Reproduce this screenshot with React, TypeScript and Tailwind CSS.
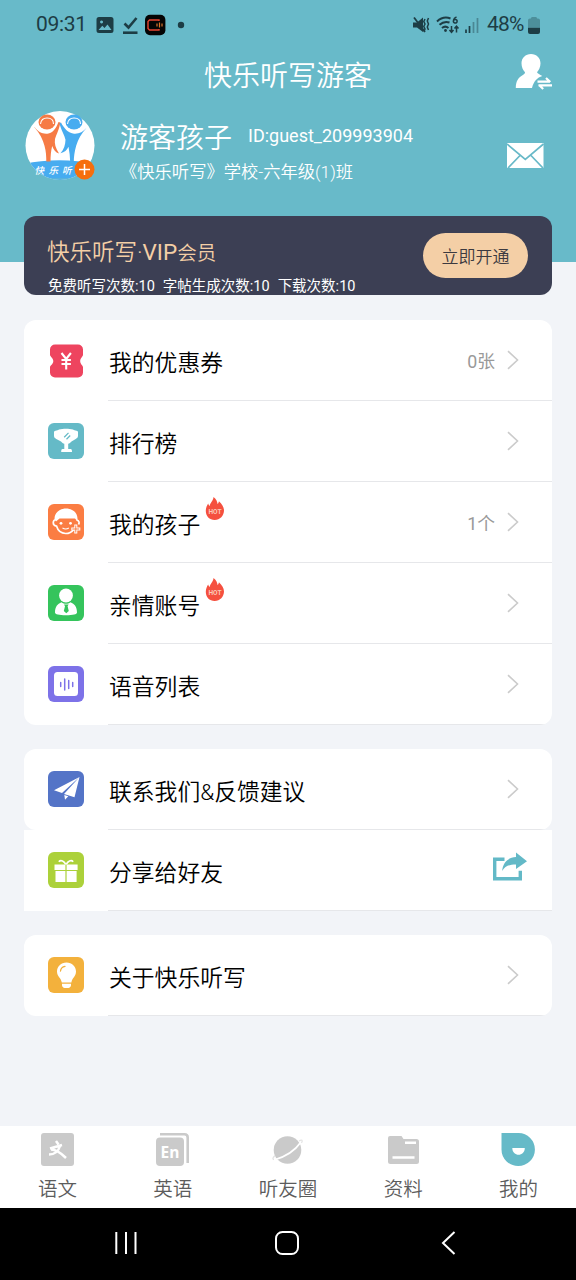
import type { ReactNode } from 'react';

interface MenuItem {
  label: string;
  icon: ReactNode;
  value?: string;
  hot?: boolean;
  share?: boolean;
}

function Tile({ color, children }: { color: string; children: ReactNode }) {
  return (
    <svg width="36" height="36" viewBox="0 0 36 36" className="mb-[2px] shrink-0">
      <rect width="36" height="36" rx="6" fill={color} />
      {children}
    </svg>
  );
}

const CouponIcon = () => (
  <svg width="36" height="36" viewBox="0 0 36 36" className="shrink-0">
    <path d="M7 1.500h23a5 5 0 0 1 5 5v5.200c0 2-2.800 3-2.800 6.300s2.800 4.300 2.800 6.300v5.200a5 5 0 0 1-5 5H7a5 5 0 0 1-5-5v-5.200c0-2 3.300-3 3.300-6.300S2 13.700 2 11.700V6.500a5 5 0 0 1 5-5z" fill="#ee445f" />
    <path d="M13.500 10l4.700 6 4.700-6M13.500 17h9.400M13.500 21h9.400M18.200 16.500v10" stroke="#fff" strokeWidth="2.100" fill="none" />
  </svg>
);

const TrophyIcon = () => (
  <Tile color="#65bac7">
    <path d="M11 6.500c4-1 10-1 14 0 1 .8 2 1 3.500 1.200 1 .1 1.500.8 1.500 1.800v3.200c0 1.500-.8 2.500-2.300 3.200l-4.200 2.600c-1 1.200-2 2-3.300 2.300V26h2.500c1 0 1.300 1 1.300 3H13.200c0-2 .3-3 1.300-3h1.800v-5.200c-1.300-.3-2.300-1.100-3.300-2.300l-4.700-2.600C6.800 15.200 6 14.200 6 12.700V9.500c0-1 .5-1.700 1.500-1.800C9 7.500 10 7.300 11 6.500z" fill="#fff" />
    <path d="M16.200 14.200l4.300-4.300M18.500 16.200l3.700-3.700" stroke="#65bac7" strokeWidth="1.300" />
  </Tile>
);

const ChildIcon = () => (
  <Tile color="#fb7d43">
    <path d="M6.500 15c0-6 5-10.500 11.500-10.500S29.500 8.800 29.500 14.500v3L27 14.500H11.500L8 17.500z" fill="#fff" />
    <path d="M8 15.500c-3.500.5-4 6 .5 6.600 1.500 5 5 7.400 9.200 7.400 3.400 0 6-1.300 7.800-3.800M28.500 16c3 .5 3 3 2 4.500" stroke="#fff" strokeWidth="1.700" fill="none" />
    <circle cx="13" cy="19.300" r="1.400" fill="#fff" />
    <circle cx="22.500" cy="19.300" r="1.400" fill="#fff" />
    <path d="M14.500 24q3.300 2 6.300 0" stroke="#fff" strokeWidth="1.100" fill="none" />
    <path d="M27.800 20.500v9M23.300 25h9" stroke="#fff" strokeWidth="3" />
    <path d="M27.800 21.500v7M24.300 25h7" stroke="#fb7d43" strokeWidth="1" />
  </Tile>
);

const FamilyIcon = () => (
  <Tile color="#35c45c">
    <circle cx="18" cy="10.500" r="6.900" fill="#fff" />
    <path d="M7 27.500c0-5.500 2.500-8.700 6.500-10.200 2.800 2 6.200 2 9 0 4 1.500 6.500 4.700 6.500 10.200 0 1.700-4 2.800-11 2.800S7 29.200 7 27.500z" fill="#fff" />
    <path d="M16 19.500h4.600l-1 1.800 1.200 4.700-2.500 2.300-2.500-2.300 1.200-4.700z" fill="#35c45c" />
  </Tile>
);

const VoiceIcon = () => (
  <Tile color="#7d72e8">
    <rect x="6" y="6" width="24" height="24" rx="3.500" fill="#fff" />
    <path d="M12.700 16.500v4M16.700 13v11M20.700 14.500v8M24.700 16.500v4" stroke="#7d72e8" strokeWidth="1.500" strokeLinecap="round" />
  </Tile>
);

const PlaneIcon = () => (
  <Tile color="#5474c7">
    <path d="M31.500 6L6 19.200l8 2.700zM31.500 6L16 23l10.500 3.200zM16.300 24l4 1.200-3.300 3.500z" fill="#fff" />
  </Tile>
);

const GiftIcon = () => (
  <Tile color="#acd13a">
    <path d="M6.500 12.500h10.900V18H6.500zM18.600 12.500h11V18h-11zM7.500 19h9.900v11H7.500zM18.600 19h10v11h-10z" fill="#fff" />
    <path d="M17.800 12.500c-1.500-3.500-5-5-7-2.800M18.200 12.500c1.500-3.500 5-5 7-2.800" stroke="#fff" strokeWidth="1.700" fill="none" />
  </Tile>
);

const BulbIcon = () => (
  <Tile color="#f3b13c">
    <path d="M18.500 5.500c5.500 0 9.500 4 9.500 9 0 5-4 6.500-4.600 11h-9.600C13.200 21 9 19.500 9 14.500c0-5 4-9 9.500-9zM14 26.800h9v1.500c0 1.500-1.200 2.600-2.700 2.600h-3.600c-1.500 0-2.700-1.100-2.700-2.600z" fill="#fff" />
    <path d="M12.500 14c.3-2.500 2-4.300 4.500-4.700" stroke="#f3b13c" strokeWidth="1.300" fill="none" strokeLinecap="round" />
  </Tile>
);

const groups: MenuItem[][] = [
  [
    { label: '我的优惠券', icon: <CouponIcon />, value: '0张' },
    { label: '排行榜', icon: <TrophyIcon /> },
    { label: '我的孩子', icon: <ChildIcon />, value: '1个', hot: true },
    { label: '亲情账号', icon: <FamilyIcon />, hot: true },
    { label: '语音列表', icon: <VoiceIcon /> },
  ],
  [
    { label: '联系我们&反馈建议', icon: <PlaneIcon /> },
    { label: '分享给好友', icon: <GiftIcon />, share: true },
  ],
  [{ label: '关于快乐听写', icon: <BulbIcon /> }],
];

function HotBadge() {
  return (
    <svg width="20" height="24" viewBox="0 0 20 24" className="absolute -top-[13px] left-full ml-[5px]">
      <path d="M8.500 0c2.500 2 4 4.500 4 7 .9-.7 1.300-1.700 1.400-2.800C17 7 19 10 19 13.500c0 5-4 9.500-9.300 9.500S.8 19 .8 14c0-3 1-5.500 2.400-7.500.3 1.300.7 2 1.500 2.600C5 5.500 8.300 4 8.500 0z" fill="#f5503f" />
      <text x="10" y="17" textAnchor="middle" fontSize="6.600" fontWeight="700" fill="#fbc9b8" fontFamily="Roboto">HOT</text>
    </svg>
  );
}

function Chevron() {
  return (
    <svg width="12" height="20" viewBox="0 0 12 20" fill="none" stroke="#cbcbcb" strokeWidth="1.600">
      <path d="M1 1.200l9.500 8.800L1 18.800" />
    </svg>
  );
}

function ShareIcon() {
  return (
    <svg width="34" height="30" viewBox="0 0 34 30" className="-mt-[7px]">
      <path d="M11.500 7.200H1.700v19.600h25.600v-8" fill="none" stroke="#63b9c7" strokeWidth="3.400" />
      <path d="M23 0.500L34 9.300 23 17v-4.500c-7 0-11 1.500-13.800 6.500C9.800 10.500 15 5.500 23 5z" fill="#63b9c7" />
    </svg>
  );
}

function Row({ item }: { item: MenuItem }) {
  return (
    <div className="flex h-[81px] items-stretch pl-6">
      <div className="flex w-[60px] items-center">{item.icon}</div>
      <div className="flex flex-1 items-center border-b border-[#e6e7ea] pr-[33px]">
        <span className="relative mt-[7px] ml-px text-[22.800px] leading-8 text-black">
          {item.label}
          {item.hot && <HotBadge />}
        </span>
        <div className={item.share ? '-mr-[8px] ml-auto' : 'ml-auto flex items-center gap-3'}>
          {item.value && <span className="mt-[4px] text-[17.800px] font-normal text-[#999]">{item.value}</span>}
          {item.share ? <ShareIcon /> : <Chevron />}
        </div>
      </div>
    </div>
  );
}

function StatusBar() {
  return (
    <div className="flex h-12 items-center pr-[36px] pl-9 text-[21px] font-normal text-[#1d3d45]">
      <span className="mt-[2px] w-[60px] tracking-[-0.300px]">09:31</span>
      <svg width="90" height="22" viewBox="0 0 90 22" className="mt-[2px]">
        <path fillRule="evenodd" d="M3 3h12a2.500 2.500 0 0 1 2.500 2.500v11A2.500 2.500 0 0 1 15 19H3a2.500 2.500 0 0 1-2.500-2.500v-11A2.500 2.500 0 0 1 3 3zM2.500 16h13l-4-5.500-3 3.500-2.200-2.200zM5.500 6.500a1.500 1.500 0 1 0 .1 0z" fill="#1d3d45" />
        <path d="M28.500 9.500l4 4 8-9.500" stroke="#1d3d45" strokeWidth="2.600" fill="none" />
        <path d="M27 18.700h14.500" stroke="#1d3d45" strokeWidth="2.600" />
        <rect x="49" y="0.800" width="20.400" height="20.400" rx="5" fill="#050505" />
        <path d="M63 7V6h-9.500L52 7.500v7l1.500 1.500H63v-1" stroke="#e64532" strokeWidth="1.400" fill="none" />
        <path d="M61 9.500v3M63.500 8.500v5M66 9.500v3" stroke="#d9772f" strokeWidth="1.200" />
        <circle cx="85" cy="11" r="3.200" fill="#1d3d45" />
      </svg>
      <svg width="70" height="20" viewBox="0 0 70 20" className="mt-[2px] ml-auto" fill="none" stroke="#1d3d45">
        <path d="M1 7.500h4l6-5v14.500l-6-4.500H1z" fill="#1d3d45" stroke="none" />
        <path d="M2 2.500l11 14.500" strokeWidth="1.800" />
        <path d="M13 4l-1.200 2.500 1.200 2.500-1.200 2.500L13 14l-1 2.500M16.500 3l-1.200 3 1.200 3-1.200 3 1.200 3" strokeWidth="1.500" />
        <path d="M25 6.500c4-3.700 9-4.700 13.500-3M27.500 9.800c3-2.700 6.500-3.500 10-2.300M30 13c2-1.700 4.500-1.700 6.500 0" strokeWidth="2" />
        <circle cx="33.500" cy="15.500" r="1.400" fill="#1d3d45" stroke="none" />
        <path d="M44.500 2c-3.500 1.200-4 5.500-1.700 6 3 .5 3-3.700.5-3.600-1 0-1.800.7-2 1.600" strokeWidth="1.500" />
        <path d="M39.500 11v6M37.500 15l2 2.300 2-2.300M44.500 17.500v-6M42.500 13.500l2-2.300 2 2.300" strokeWidth="1.500" />
        <path d="M54 14.500V18M57.500 11v7" strokeWidth="1.700" />
        <path d="M61.500 7v11M65.500 3v15" strokeWidth="1.700" opacity=".4" />
      </svg>
      <span className="mt-[2px] ml-[5px] w-[40px] text-[21px] tracking-[-0.800px]">48%</span>
      <svg width="12" height="17" viewBox="0 0 12 18" preserveAspectRatio="none" className="mt-[2px] ml-px">
        <path d="M3 1.500C3 .6 3.600 0 4.500 0h3C8.400 0 9 .6 9 1.500h1A2 2 0 0 1 12 3.500v8H0v-8a2 2 0 0 1 2-2z" fill="#4d8f9b" />
        <path d="M0 11.500h12V16a2 2 0 0 1-2 2H2a2 2 0 0 1-2-2z" fill="#1d3d45" />
      </svg>
    </div>
  );
}

function SwitchUserIcon() {
  return (
    <svg width="38" height="38" viewBox="0 0 38 38" className="mb-[4px]">
      <path d="M16 1c5.500 0 9.500 4 9.500 9.300 0 4-1.700 6.700-3.500 9 .8 1.500 2.500 2.200 5.300 3.700-5 1.700-8.500 5-10.300 12H.8c0-6.700 2.500-10.500 6.700-12.700 1.700-1 2.500-1.700 2.500-3-2-2.300-3.500-5-3.500-9C6.500 5 10.500 1 16 1z" fill="#fff" />
      <path d="M22.500 28.700H35M31 25l4.300 4M37 32.300H23.500M24 32l4.200 4" stroke="#fff" strokeWidth="2.200" fill="none" />
    </svg>
  );
}

function Avatar() {
  return (
    <svg width="72" height="72" viewBox="0 0 72 72" className="mt-[2px] shrink-0">
      <clipPath id="avatar-clip">
        <circle cx="36" cy="35.500" r="34.500" />
      </clipPath>
      <g clipPath="url(#avatar-clip)">
        <rect width="72" height="72" fill="#fff" />
        <path d="M0 54c20-5 50-5 72 0v14H56v2H24v-2H0z" fill="#47acf0" />
        <path d="M0 60l15 8h42v4H0z" fill="#68bac9" opacity=".5" />
      </g>
      <g fill="#f67b45">
        <ellipse cx="23" cy="12" rx="8.500" ry="7.500" />
        <path d="M10.500 17c3.500 5 8.500 7.500 14 6.500 4.500-1 7.500-5 10-11.500l1.800.5c-1 7-3.800 11.500-5.300 16.500-.7 4.500.5 9 4 14.500-3.500-1-5.500-4-6.800-7.500-1.300 5-1.600 10-1.700 15.500h-4.200c.2-9-1-22-11.800-34z" />
      </g>
      <g fill="#47acf0">
        <ellipse cx="50" cy="12" rx="8.500" ry="7.500" />
        <path d="M62.500 18c-3.500 4-8.500 6.500-13.500 5.500-5-1-9-5-12-11l-1.500.7c1.500 7 5 11.500 6 16.500-.2 5.500-1.500 9.500-5 13.500 4-1 6.500-3 8-6.500 1 5 1.500 10 1.700 15h3.600c.2-9 2.200-23 12.700-33.700z" />
      </g>
      <path d="M16.500 14c.5-4 2-6 6.500-6s6.500 2 6.500 6M43.500 14c.5-4 2-6 6.500-6s6.500 2 6.500 6" fill="none" stroke="#fff" strokeWidth="1.100" />
      <g fill="#fff" fontFamily="'Noto Sans CJK SC', sans-serif" fontSize="9.500" fontStyle="italic" fontWeight="500">
        <text x="10.500" y="64">快</text>
        <text x="24.500" y="64">乐</text>
        <text x="38" y="63.500">听</text>
      </g>
      <circle cx="60.500" cy="59.500" r="10" fill="#f66e0c" />
      <path d="M60.500 54v11M55 59.500h11" stroke="#fff" strokeWidth="1.500" />
    </svg>
  );
}

function MailIcon() {
  return (
    <svg width="37" height="25" viewBox="0 0 37 25" className="mt-[20px] ml-auto">
      <rect width="36.500" height="25" fill="#fff" />
      <path d="M0 1l18.300 15.500L36.500 1M1 25l12-12.500M36 25L24 12.500" stroke="#68b9c8" strokeWidth="1.700" fill="none" />
    </svg>
  );
}

const tabs = [
  {
    label: '语文',
    icon: (
      <>
        <rect x="1" y="1" width="33" height="33" rx="3" fill="#cacaca" />
        <path d="M16 9l2.500 3.500M10 16.500l12-3.500M20 14c-1.500 5-5 8.500-11 8.500M11 17.500c5 0 11 4.500 15 8.500" stroke="#fff" strokeWidth="2.500" fill="none" />
      </>
    ),
  },
  {
    label: '英语',
    icon: (
      <>
        <path d="M5 2.300h24.500c2 0 3.200 1.200 3.200 3.200V31" stroke="#cacaca" strokeWidth="2.600" fill="none" />
        <rect x="1" y="5.500" width="28" height="28.500" rx="4" fill="#cacaca" />
        <text x="15" y="26" textAnchor="middle" fontFamily="'Open Sans', sans-serif" fontWeight="700" fontSize="15.500" fill="#fff">En</text>
      </>
    ),
  },
  {
    label: '听友圈',
    icon: (
      <>
        <circle cx="17.500" cy="18" r="13.800" fill="#cacaca" />
        <path d="M4 28c9-2.500 20-8 27-18" stroke="#fff" strokeWidth="1.800" fill="none" />
        <path d="M4 27.500c-2.500-.5 0-3 1-4M29 9c3-2 4-.5 2.500 2" stroke="#e4e4e4" strokeWidth="1.300" fill="none" />
      </>
    ),
  },
  {
    label: '资料',
    icon: (
      <>
        <path d="M4 4h11.500l2 3h13A2.500 2.500 0 0 1 33 9.500v20a2.500 2.500 0 0 1-2.500 2.500H4.500A2.500 2.500 0 0 1 2 29.500V6a2 2 0 0 1 2-2z" fill="#cacaca" />
        <path d="M19 10.700h11M6.500 25.500h22" stroke="#fff" strokeWidth="2.600" />
      </>
    ),
  },
  {
    label: '我的',
    icon: (
      <>
        <path d="M.5 1h17a16.700 16.500 0 1 1-17 16.500z" fill="#66bac8" />
        <path d="M11.300 16h12.500c0 9-12.500 9-12.500 0z" fill="#fff" />
      </>
    ),
  },
];

export default function App() {
  return (
    <div className="flex h-[1280px] w-[576px] flex-col overflow-hidden bg-[#f2f4f8] font-['Roboto','Noto_Sans_CJK_SC',sans-serif] font-[350] whitespace-nowrap">
      <header className="h-[262px] shrink-0 bg-[#68bac9] text-white">
        <StatusBar />
        <div className="grid h-[52px] grid-cols-[1fr_auto_1fr] items-center">
          <span />
          <h1 className="mt-[5px] text-[28px] font-[350]">快乐听写游客</h1>
          <div className="flex justify-end pr-[23px]">
            <SwitchUserIcon />
          </div>
        </div>
        <div className="flex h-[90px] items-center pr-8 pl-6">
          <Avatar />
          <div className="mt-[15px] ml-6">
            <div className="flex h-9 items-center gap-4">
              <span className="mt-[3px] text-[28px]">游客孩子</span>
              <span className="mb-[4px] text-[18px] font-normal">ID:guest_209993904</span>
            </div>
            <p className="mt-[2px] h-7 text-[17.300px] leading-7">《快乐听写》学校-六年级(1)班</p>
          </div>
          <MailIcon />
        </div>
      </header>

      <section className="mx-6 -mt-[46px] flex h-[79px] shrink-0 justify-between overflow-hidden rounded-[12px] bg-[#3c3f54] pr-6 pl-6">
        <div>
          <h2 className="mt-[20px] -ml-px h-8 text-[22.500px] leading-8 font-[350] text-[#f4cfa6]">
            快乐听写·<span className="font-normal">VIP</span>
            <span className="text-[19.500px]">会员</span>
          </h2>
          <p className="mt-[9px] flex gap-2 text-[14.500px] leading-5 font-normal text-white">
            <span>免费听写次数:10</span>
            <span>字帖生成次数:10</span>
            <span>下载次数:10</span>
          </p>
        </div>
        <button className="mt-[17px] h-[45px] w-[105px] rounded-full bg-[#f4cfa6] pt-[5px] text-[17px] text-[#3c3a40]">
          立即开通
        </button>
      </section>

      <main className="flex flex-1 flex-col gap-6 px-6 pt-[25px]">
        {groups.map((items) =>
          items.some((item) => item.share) ? (
            <div key={items[0].label}>
              {items.map((item) => (
                <div key={item.label} className={item.share ? 'bg-white' : 'overflow-hidden rounded-[12px] bg-white'}>
                  <Row item={item} />
                </div>
              ))}
            </div>
          ) : (
            <div key={items[0].label} className="overflow-hidden rounded-[12px] bg-white">
              {items.map((item) => (
                <Row key={item.label} item={item} />
              ))}
            </div>
          )
        )}
      </main>

      <nav className="grid h-[82px] shrink-0 grid-cols-5 bg-white">
        {tabs.map((tab) => (
          <div key={tab.label} className="flex flex-col items-center pt-[6px]">
            <svg width="35" height="35" viewBox="0 0 35 35">
              {tab.icon}
            </svg>
            <span className="mt-[9px] text-[19.500px] leading-7 text-[#5c5c5c]">{tab.label}</span>
          </div>
        ))}
      </nav>

      <footer className="flex h-[72px] shrink-0 items-center bg-black pb-[2px] pl-[114px]">
        <svg width="24" height="24" viewBox="0 0 24 24" stroke="#fff" strokeWidth="2">
          <path d="M2.300 1v22M12 1v22M21.500 1v22" />
        </svg>
        <svg width="24" height="24" viewBox="0 0 24 24" fill="none" stroke="#fff" strokeWidth="2" className="ml-[137px]">
          <rect x="1" y="1" width="22" height="22" rx="6.500" />
        </svg>
        <svg width="15" height="24" viewBox="0 0 15 24" fill="none" stroke="#fff" strokeWidth="2" className="ml-[142px]">
          <path d="M13.500 1L2 12l11.500 11" />
        </svg>
      </footer>
    </div>
  );
}
